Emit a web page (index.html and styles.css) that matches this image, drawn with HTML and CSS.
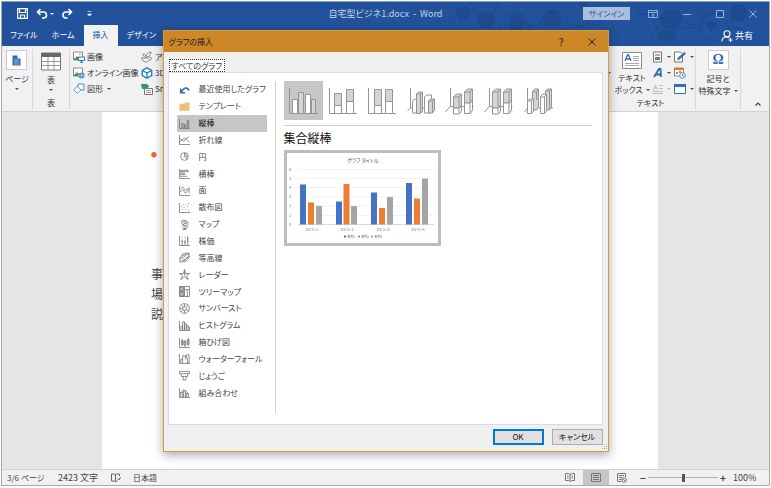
FILE: index.html
```html
<!DOCTYPE html>
<html lang="ja">
<head>
<meta charset="utf-8">
<meta name="viewport" content="width=device-width, initial-scale=1">
<title>自宅型ビジネ1.docx - Word</title>
<link rel="stylesheet" href="styles.css">
</head>
<body>
<div class="app">
  <header class="titlebar">
    <svg class="pattern" viewBox="0 0 320 44" aria-hidden="true">
      <g fill="#1e4a90" stroke="none">
        <path d="M16 4h8l4 7-4 7h-8l-4-7z"/><path d="M38 10h10l5 8-5 8h-10l-5-8z"/><path d="M67 14h10l5 8-5 8h-10z"/><path d="M104 8h10l5 8-5 8h-10l-5-8z"/><path d="M134 0h12l-6 10z"/><path d="M222 8h12l6 9-6 10h-12l-6-10z"/><path d="M218 28h12l4 6-4 5h-12l-4-5z"/><path d="M262 20h12l-6 10z"/><path d="M288 2h12l5 8-5 9h-12z"/>
      </g>
      <g fill="none" stroke="#1d498e">
        <path d="M0 18h10l6-10h14l7 12 12 0M28 0l8 12h14l7-12M56 26l8-14h14l8 14-8 12M84 24h12l8-14h16l8 14h14l8-14M186 26l8-14h12l8 14 8 0M206 12l8-12M214 26l-6 12M240 26h16l8-14h14l8 14h16M264 12l-8-12M286 26l-8 12h-14l-8-12"/>
        <circle cx="78" cy="22" r="9"/><circle cx="152" cy="14" r="9"/><circle cx="250" cy="14" r="9"/>
      </g>
    </svg>
    <div class="quick">
      <button aria-label="上書き保存"><svg width="11" height="11" viewBox="0 0 11 11"><path d="M.7.7h9.6v9.6H.7zM2.500 1v3.500h6V1M3.500 10V7h4v3" fill="none" stroke="#fff" stroke-width="1.2"/></svg></button>
      <button aria-label="元に戻す"><svg width="18" height="11" viewBox="0 0 18 11"><path d="M4.500 1L1.500 4l3 3M2 4h5.500a3 3 0 0 1 0 6H6" fill="none" stroke="#fff" stroke-width="1.6"/><path d="M14 5h4l-2 2z" fill="#fff"/></svg></button>
      <button aria-label="やり直し"><svg width="11" height="11" viewBox="0 0 11 11"><path d="M6.500 1l3 3-3 3M9 4H4a3 3 0 0 0 0 6h1.500" fill="none" stroke="#fff" stroke-width="1.600"/></svg></button>
      <button aria-label="カスタマイズ" class="more"><svg width="5" height="6" viewBox="0 0 5 6"><path d="M.5.500h4M.5 3h4l-2 2z" fill="#fff" stroke="#fff" stroke-width=".6"/></svg></button>
    </div>
    <h1>自宅型ビジネ1.docx &nbsp;- &nbsp;Word</h1>
    <div class="winctl">
      <button class="signin">サインイン</button>
      <button aria-label="リボンの表示オプション"><svg width="10" height="8" viewBox="0 0 10 8"><path d="M.5.5h9v7h-9zM.5 2.500h9M5 7V4M3.500 5.200L5 3.800l1.500 1.400" fill="none" stroke="#9eb4d6" stroke-width=".9"/></svg></button>
      <button aria-label="最小化"><svg width="8" height="8" viewBox="0 0 8 8"><path d="M0 4.500h8" stroke="#9eb4d6"/></svg></button>
      <button aria-label="最大化"><svg width="8" height="8" viewBox="0 0 8 8"><path d="M.5.500h7v7h-7z" fill="none" stroke="#9eb4d6"/></svg></button>
      <button aria-label="閉じる"><svg width="8" height="8" viewBox="0 0 8 8"><path d="M.5.500l7 7m0-7l-7 7" stroke="#9eb4d6"/></svg></button>
    </div>
  </header>
  <nav class="tabs">
    <a href="#">ファイル</a><a href="#">ホーム</a><a href="#" class="on">挿入</a><a href="#">デザイン</a>
    <button class="share"><svg width="12" height="12" viewBox="0 0 12 12" fill="none" stroke="#fff" stroke-width="1.100"><circle cx="6" cy="3.800" r="3"/><path d="M.8 11.500C1 8.500 3 7 5.500 7s2.500.5 3 1M7.500 10h4M9.500 8v4"/></svg>共有</button>
  </nav>
  <section class="ribbon">
    <div class="group g-page">
      <button class="big"><span class="box"><svg width="9" height="11" viewBox="0 0 9 11"><path d="M.5.500h5l3 3v7h-8z" fill="#2f6db5"/><path d="M5.500 0v3.500H9" fill="#fff"/><path d="M2 5h5M2 7h5M2 9h5" stroke="#bcd3ee" stroke-width=".7"/></svg></span>ページ<i class="dd"></i></button>
    </div>
    <div class="group g-table">
      <button class="big"><svg width="20" height="19" viewBox="0 0 20 19"><path d="M.5 1h19v17H.5z" fill="#fff" stroke="#777"/><path d="M0 1h20v4H0z" fill="#686868"/><path d="M1 9.500h18M1 13.500h18M7 5v13M13 5v13" stroke="#999"/></svg>表<i class="dd"></i></button>
      <span class="glabel">表</span>
    </div>
    <div class="group g-fig">
      <div class="col">
        <button><svg width="12" height="12" viewBox="0 0 12 12"><path d="M.5 1h9v8h-9z" fill="#fff" stroke="#888"/><path d="M1 8l3-3 2 2v2H1z" fill="#5d8f67"/><circle cx="7" cy="3.200" r="1" fill="#e3a44c"/><path d="M5.500 6h6v3.500h-6zM8.500 9.500V11M7 11.300h3" fill="#fff" stroke="#2f6db5"/></svg>画像</button>
        <button><svg width="12" height="12" viewBox="0 0 12 12"><path d="M.5 1h9v8h-9z" fill="#fff" stroke="#888"/><path d="M1 8l3-3 2 2v2H1z" fill="#5d8f67"/><circle cx="8.500" cy="8.500" r="3" fill="#4e88c7"/><path d="M5.500 8.500h6M8.500 5.500v6" stroke="#d5e4f4" stroke-width=".6"/></svg>オンライン画像</button>
        <button><svg width="12" height="12" viewBox="0 0 12 12" fill="#fff" stroke="#4e88c7"><path d="M5 1h6v6H5z"/><path d="M4 3l4 4-4 4-4-4z" transform="translate(.7 .5) scale(.9)"/></svg>図形<i class="dd"></i></button>
      </div>
      <div class="col">
        <button><svg width="12" height="12" viewBox="0 0 12 12" fill="none" stroke="#7d8a90"><path d="M5 5c1-3 3-4 5-4 0 3-2 5-5 5M5 5C4 3 3 3 2 3c0 2 1 3 3 3M.5 7h7c1-1 3-1 3 .5S9 9 8 9c-1 3-6 3-7.500-2z"/></svg>アイコン</button>
        <button><svg width="12" height="12" viewBox="0 0 12 12" fill="#fff" stroke="#2b7cc8" stroke-width="1.400"><path d="M6 .8l4.700 2.500v5.400L6 11.200 1.300 8.700V3.300z"/><path d="M1.300 3.300L6 6l4.700-2.700M6 6v5"/></svg>3D モデル</button>
        <button><svg width="12" height="12" viewBox="0 0 12 12"><path d="M0 1h6l2 2.500L6 6H1z" fill="#31956b"/><path d="M3.500 5.500h8v6h-8z" fill="#fff" stroke="#777"/><path d="M5 7.500h5M5 9.500h5" stroke="#999"/></svg>SmartArt</button>
      </div>
    </div>
    <div class="group g-text">
      <div class="row">
        <i class="dd edge"></i>
        <button class="big"><svg width="20" height="17" viewBox="0 0 20 17"><path d="M.5.500h19v16H.5z" fill="#fff" stroke="#888"/><path d="M3 9l2.500-6h1L9 9M4 7h4" fill="none" stroke="#2f6db5" stroke-width="1.300"/><path d="M11 4.500h6M11 6.500h6M11 8.500h6M3 11.500h14M3 13.500h14" stroke="#aaa"/></svg><span>テキスト<br>ボックス<i class="dd inline"></i></span></button>
        <div class="icons">
          <button aria-label="クイック パーツ"><svg width="10" height="12" viewBox="0 0 10 12"><path d="M.5 1h8v10h-8z" fill="#fff" stroke="#777"/><path d="M2 3h5v2H2z" fill="#e0a453"/><path d="M2 6h5v3H2z" fill="#4c83c3"/></svg><i class="dd"></i></button>
          <button aria-label="署名欄"><svg width="12" height="12" viewBox="0 0 12 12"><path d="M.5 1h6l2 2v8h-8z" fill="#fff" stroke="#777"/><path d="M3 9l1-2.500L10.500 1 12 2.500 5.500 8.500z" fill="#2f6db5"/></svg><i class="dd"></i></button>
          <button aria-label="ワードアート"><svg width="10" height="12" viewBox="0 0 10 12"><path d="M1 10l5-8h1.500l.5 8M3 7.500h5" fill="none" stroke="#2a69b5" stroke-width="1.800"/></svg><i class="dd"></i></button>
          <button aria-label="日付と時刻"><svg width="12" height="12" viewBox="0 0 12 12"><path d="M.5 1h9v8h-9z" fill="#fff" stroke="#888"/><path d="M0 1h10v2H0zM2 5h2v2H2zM5 4h2v2H5z" fill="#d9773f"/><circle cx="8.500" cy="8.500" r="2.800" fill="#fff" stroke="#4e88c7"/><path d="M8.500 7v2h1.500" fill="none" stroke="#4e88c7"/></svg></button>
          <button aria-label="ドロップ キャップ" class="off"><svg width="10" height="12" viewBox="0 0 10 12"><path d="M.5 7l2-5 2 5M1 5h3M6 2.500h4M6 5.500h4M0 8.500h10M0 10.500h10" fill="none" stroke="#bbb"/></svg><i class="dd"></i></button>
          <button aria-label="オブジェクト"><svg width="12" height="12" viewBox="0 0 12 12"><path d="M.5 1.500h11v9H.5z" fill="#fff" stroke="#2f6db5"/><path d="M0 1h12v3H0z" fill="#2f6db5"/></svg><i class="dd"></i></button>
        </div>
      </div>
      <span class="glabel">テキスト</span>
    </div>
    <div class="group g-sym">
      <button class="big"><span class="box omega">Ω</span><span>記号と<br>特殊文字<i class="dd inline"></i></span></button>
    </div>
    <button class="fold" aria-label="リボンを折りたたむ"><svg width="6" height="4" viewBox="0 0 6 4"><path d="M.5 3.500L3 1l2.500 2.500" fill="none" stroke="#444" stroke-width="1.200"/></svg></button>
  </section>
  <main class="canvas">
    <article class="page">
      <p class="bullet">●</p>
      <p>事業の</p><p>場所の</p><p>説明の</p>
    </article>
  </main>
  <footer class="status">
    <span class="s-page">3/6 ページ</span><span class="s-count">2423 文字</span>
    <svg class="s-proof" width="10" height="10" viewBox="0 0 10 10" fill="none" stroke="#666"><path d="M4.500 2v7L3.500 8H.5V1h3zM4.500 2l1-1h3v2M4.500 9l1-1h1M6.500 5.500L8 7l1.500-3"/></svg>
    <span>日本語</span>
    <div class="views">
      <button aria-label="閲覧モード"><svg width="10" height="9" viewBox="0 0 10 9" fill="none" stroke="#777"><path d="M.5.500h3l1.500 1 1.500-1h3v7h-3L5 8.500l-1.500-1h-3zM5 1v7M2 3h1.500M2 5h1.500M6.500 3H8M6.500 5H8"/></svg></button>
      <button aria-label="印刷レイアウト" class="on"><svg width="10" height="9" viewBox="0 0 10 9" fill="none" stroke="#777"><path d="M.5.500h9v8h-9zM2 2.500h6M2 4.500h6M2 6.500h6"/></svg></button>
      <button aria-label="Web レイアウト"><svg width="10" height="10" viewBox="0 0 10 10" fill="none" stroke="#777"><path d="M4 8.500H.5v-8h8V4M2 2.500h5M2 4.500h3M2 6.500h2"/><circle cx="7" cy="7" r="2.300"/><path d="M5.500 6l3 2"/></svg></button>
    </div>
    <div class="zoom"><button aria-label="縮小">−</button><input type="range" aria-label="ズーム" min="0" max="200" value="100"><button aria-label="拡大">+</button></div>
    <span class="pct">100%</span>
  </footer>

  <section class="dialog" role="dialog" aria-labelledby="dlg">
    <header class="dhead"><h2 id="dlg">グラフの挿入</h2><button class="help" aria-label="ヘルプ">?</button><button aria-label="閉じる"><svg width="8" height="8" viewBox="0 0 8 8"><path d="M.5.500l7 7m0-7l-7 7" stroke="#222"/></svg></button></header>
    <div class="dbody">
      <button class="dtab">すべてのグラフ</button>
      <div class="panel">
        <ul class="kinds">
          <li><svg viewBox="0 0 12 12"><path d="M6.500 9.500H1.800V4.800M2 9l3-3.500C7 3.500 9.500 4 11 7" fill="none" stroke="#2b68b0" stroke-width="1.700"/></svg>最近使用したグラフ</li>
          <li><svg viewBox="0 0 12 12"><path d="M.5 3H6l1-1.500h4.500v9H.5z" fill="#eac07a" stroke="none"/></svg>テンプレート</li>
          <li class="on"><svg viewBox="0 0 12 12"><path d="M.5 1v10.500H12M3 11V6h1.500v5M6 11V7h1.500v4M9 11V2.500h1.500V11"/></svg>縦棒</li>
          <li><svg viewBox="0 0 12 12"><path d="M.5 1v10.500H12M1 9l5-5 5 5M1 5l4 3 3-3 3-2"/></svg>折れ線</li>
          <li><svg viewBox="0 0 12 12"><circle cx="6" cy="6" r="4.200"/><path d="M6 2v4l3 3M7.500 2.500V6H10"/></svg>円</li>
          <li><svg viewBox="0 0 12 12"><path d="M.5 1v10.500H12M1 2.500h9v1.500H1M1 5.500h5V7H1M1 9h8"/></svg>横棒</li>
          <li><svg viewBox="0 0 12 12"><path d="M.5 1v10.500H12M1 5l3-3 3 4 4-3v6M1 8l3-3 3 4 4-4"/></svg>面</li>
          <li><svg viewBox="0 0 12 12"><path d="M.5 1v10.500H12"/><path d="M3 8h1M5 6h1M7 8h1M9 5h1M4 3h1M7 3h1M10 2h1M10 9h1M2 5h1"/></svg>散布図</li>
          <li><svg viewBox="0 0 12 12"><path d="M3 2l2-1 3 1 2 2-1 3-2 2-2-1-2-3zM4 3h4v2H5v2h3M3 9c2 2 5 2 7-1M6 10v1.500M4 11.500h4"/></svg>マップ</li>
          <li><svg viewBox="0 0 12 12"><path d="M.5 1v10.500H12M3.500 5v6M6.500 5v6M9.500 1v10"/><path d="M3.500 2v1M6.500 2v1M2.500 7h2M5.500 8h2M8.500 4h2M8.500 7h2"/></svg>株価</li>
          <li><svg viewBox="0 0 12 12"><path d="M1 7l3-5 7-1v5l-3 4-7 1zM1 7l4-1 3-3 3-1M3 9c3 0 5-2 8-5M3 5c2-2 4-1 5-3M5 10l3-3 3-2"/></svg>等高線</li>
          <li><svg viewBox="0 0 12 12"><path d="M6 .5l1 4.500 4.500 0L8 7l2 4.500L6 8.500l-4 3L4 7 .5 5H5zM6 1v6"/></svg>レーダー</li>
          <li><svg viewBox="0 0 12 12"><path d="M.5.500h11v11H.5zM6 1v10M6 4h5M9 4v7M1 6h5"/><path d="M1 1h4v4H1zM1 7h4v4H1z" fill="#bbb"/></svg>ツリーマップ</li>
          <li><svg viewBox="0 0 12 12"><circle cx="6" cy="6" r="5.300"/><circle cx="6" cy="6" r="2"/><path d="M6 1v3M1 6h3M8 7l3 2M4.500 7.500L2 10M8 4l2-2M3 3l2 1.500M6 8v3"/></svg>サンバースト</li>
          <li><svg viewBox="0 0 12 12"><path d="M.5 1v10.500H12M2 11V7h2v4M4 11V2h2v9M6 11V4h2v7M8 11V6h2v5M10 8h1.500v3"/></svg>ヒストグラム</li>
          <li><svg viewBox="0 0 12 12"><path d="M.5 1v10.500H12M3.500 2v8M6.500 3v8M10 1v9M2.500 4h2v4h-2zM5.500 5h2v4h-2zM9 3h2v5H9z"/></svg>箱ひげ図</li>
          <li><svg viewBox="0 0 12 12"><path d="M.5 1v10.500H12M2 11V7h2v4M4 7V3h3v4M8 5V2h3v9H9V5z"/></svg>ウォーターフォール</li>
          <li><svg viewBox="0 0 12 12"><path d="M.5 1.500h11v2.500H.5zM2.500 4v3h7V4M4.500 7v4h3V7"/></svg>じょうご</li>
          <li><svg viewBox="0 0 12 12"><path d="M.5 1v10.500H12M2 11V6h2v5M5 11V4h2v7M8 11V7h2v4M1 7l4-4 3 2 3 4"/></svg>組み合わせ</li>
        </ul>
        <div class="detail">
          <div class="thumbs">
            <button class="on" aria-label="集合縦棒"><svg viewBox="0 0 39 39"><path class="w" d="M8.500 18.500h5v14h-5zM21.500 13.500h5v19h-5z"/><path class="g" d="M14.500 11.500h5v21h-5zM27.500 18.500h4v14h-4z"/><path class="a" d="M5.500 7v25.500H34"/></svg></button>
            <button aria-label="積み上げ縦棒"><svg viewBox="0 0 39 39"><path class="w" d="M11.500 24.500h7v8h-7zM23.500 20.500h7v12h-7z"/><path class="g" d="M11.500 12.500h7v12h-7zM23.500 8.500h7v12h-7z"/><path class="a" d="M6.500 7v25.500H34"/></svg></button>
            <button aria-label="100% 積み上げ縦棒"><svg viewBox="0 0 39 39"><path class="w" d="M12.500 24.500h7v8h-7zM23.500 20.500h7v12h-7z"/><path class="g" d="M12.500 8.500h7v16h-7zM23.500 8.500h7v12h-7z"/><path class="a" d="M6.500 7v25.500H34"/></svg></button>
            <button aria-label="3-D 集合縦棒"><svg viewBox="0 0 39 39"><path class="a" d="M9.500 7v20l-3 3M9.500 27H34"/><path class="w" d="M11.500 20l2-2h3v14h-5zM23.500 16l2-2h5v15l-2 3h-5z"/><path class="g" d="M15.500 13l2-2h4v19l-2 2.500h-4zM27.500 20l2-2h4v11l-2 3h-4z"/><path class="a" d="M15.500 13h4l2-2M19.500 13v19M27.500 20h4l2-2M31.500 20v12"/></svg></button>
            <button aria-label="3-D 積み上げ縦棒"><svg viewBox="0 0 39 39"><path class="a" d="M10.500 7v18l-5 6M10.500 25.500h23"/><path class="g" d="M13.500 16l3-3h5v11l-2 3h-6zM24.500 11l3-3h5v11l-2 3h-6z"/><path class="w" d="M13.500 27h6l2-3v6l-2 3h-6zM24.500 22h6l2-3v10l-2 3.500h-6z"/><path class="a" d="M13.500 16h5.500l2.500-3M19 16v16M24.500 11H30l2.500-3M30 11v21"/></svg></button>
            <button aria-label="3-D 100% 積み上げ縦棒"><svg viewBox="0 0 39 39"><path class="a" d="M10.500 7v18l-5 6M10.500 25.500h23"/><path class="g" d="M13.500 11l3-3h5v16l-2 3h-6zM24.500 11l3-3h5v11l-2 3h-6z"/><path class="w" d="M13.500 27h6l2-3v6l-2 3h-6zM24.500 22h6l2-3v10l-2 3.500h-6z"/><path class="a" d="M13.500 11h5.500l2.500-3M19 11v21M24.500 11H30l2.500-3M30 11v21"/></svg></button>
            <button aria-label="3-D 縦棒"><svg viewBox="0 0 39 39"><path class="a" d="M9.500 7v20l-3 4M9.500 27H35"/><path class="g" d="M14.500 11l2-3h4v17l-2 4h-4zM27.500 10l2-2h4v18l-2 3h-4z"/><path class="w" d="M9.500 20l2-2h4v12l-2 2.500h-4zM22.500 16l2-3h4v17l-2 2.500h-4z"/><path class="a" d="M14.500 11h4l2-3M18.500 11v8M9.500 20h4l2-2M13.500 20v12M22.500 16h4l2-3M26.500 16v16M27.500 10h4l2-2M31.500 10v18"/></svg></button>
          </div>
          <h3>集合縦棒</h3>
          <svg class="preview" viewBox="0 0 151 90" role="img" aria-label="グラフ タイトル">
            <path d="M11 62.500h136M11 53h136M11 44h136M11 34.500h136M11 25.500h136M11 16.500h136" stroke="#ececec" stroke-width=".7"/>
            <path d="M11 71.500h136" stroke="#ccc" stroke-width=".7"/>
            <g fill="#4472c4"><path d="M13 71.500V31.500h6v40zM49 71.500v-23h6v23zM84 71.500v-32h6v32zM119 71.500V30h6v41.500z"/></g>
            <g fill="#ed7d31"><path d="M21 71.500v-22h6v22zM56.500 71.500V31h6v40.500zM92 71.500V55h6v16.500zM127 71.500v-26h6v26z"/></g>
            <g fill="#a5a5a5"><path d="M29 71.500V53h6v18.500zM64 71.500V53h6v18.500zM100 71.500V44h6v27.500zM135 71.500V25.500h6v46z"/></g>
            <g class="ct"><text x="76" y="9" class="t">グラフ タイトル</text>
            <text x="3" y="73">0</text><text x="3" y="64">1</text><text x="3" y="54">2</text><text x="3" y="45">3</text><text x="3" y="36">4</text><text x="3" y="27">5</text><text x="3" y="18">6</text>
            <text x="25" y="78">カテゴリ 1</text><text x="60" y="78">カテゴリ 2</text><text x="96" y="78">カテゴリ 3</text><text x="131" y="78">カテゴリ 4</text>
            <text x="64" y="85">系列1</text><text x="78" y="85">系列2</text><text x="91" y="85">系列3</text></g>
            <path d="M57 82.500h2v2h-2z" fill="#4472c4"/><path d="M71 82.500h2v2h-2z" fill="#ed7d31"/><path d="M84 82.500h2v2h-2z" fill="#a5a5a5"/>
          </svg>
        </div>
      </div>
      <div class="actions"><button class="ok">OK</button><button>キャンセル</button></div>
    </div>
    <svg class="grip" width="7" height="7" viewBox="0 0 7 7"><path d="M5 0h1v1H5zM5 2h1v1H5zM5 4h1v1H5zM3 2h1v1H3zM3 4h1v1H3zM1 4h1v1H1z" fill="#aaa"/></svg>
  </section>
</div>
</body>
</html>
```

FILE: styles.css
```css
* { box-sizing: border-box; }
html, body { height: 100%; }
body {
  margin: 0;
  display: flex;
  background: #fff;
  color: #333;
  font: 8px/12px "Noto Sans CJK JP", "Noto Sans", sans-serif;
  font-feature-settings: "palt";
}
button {
  padding: 0;
  border: 0;
  background: none;
  color: inherit;
  font: inherit;
  font-feature-settings: inherit;
}
h1, h2, h3, p, ul { margin: 0; padding: 0; font-weight: 400; }
svg { display: block; flex: none; }

.app {
  position: relative;
  flex: 1;
  display: flex;
  flex-direction: column;
  margin: 1px 1px 2px;
  border: 1px solid #aaa;
  border-top-color: #8a9dbd;
  overflow: hidden;
}

/* Title bar */
.titlebar {
  position: relative;
  flex: none;
  display: grid;
  grid-template-columns: 1fr auto 1fr;
  height: 23px;
  align-items: center;
  background: #22529b;
  color: #c3d0e5;
}
.pattern { position: absolute; right: 6px; top: 0; width: 320px; height: 44px; }
.quick { display: flex; align-items: center; gap: 8px; padding-left: 15px; }
.quick .more { margin-left: 6px; }
h1 { font-size: 9px; }
.winctl { position: relative; display: flex; justify-content: flex-end; align-items: center; gap: 25px; padding-right: 12px; }
.signin { width: 47px; height: 13px; margin-right: -7px; background: #aabfde; color: #22529b; }

.tabs { flex: none; display: flex; height: 21px; padding-left: 1px; background: #22529b; }
.tabs a { padding: 0 7px; color: #fff; text-decoration: none; line-height: 20px; }
.tabs a.on { margin: 0 2px; padding: 0 9px; background: #f3f3f3; color: #22529b; }
.share { position: relative; margin: 0 16px 0 auto; display: flex; align-items: center; gap: 2px; color: #fff; font-size: 9px; }

/* Ribbon */
.ribbon {
  flex: none;
  display: flex;
  height: 66px;
  padding: 3px 0 2px;
  background: #f1f1f1;
  border-bottom: 1px solid #d2d2d2;
}
.group { display: flex; flex-direction: column; align-items: center; border-right: 1px solid #d8d8d8; }
.g-page { width: 31px; }
.g-table { width: 37px; }
.g-fig { flex-direction: row; align-items: flex-start; gap: 7px; padding-left: 3px; border: 0; }
.g-text { width: 90px; margin-left: auto; }
.g-sym { width: 45px; }
.big { display: flex; flex-direction: column; align-items: center; line-height: 12px; gap: 3px; padding-top: 1px; }
.g-table .big { padding-top: 3px; }
.box { display: grid; place-items: center; width: 21px; height: 20px; background: #fff; border: 1px solid #ccc; }
.omega { color: #2f6db5; font: bold 14px/16px "Liberation Serif", serif; }
.dd { flex: none; width: 0; height: 0; border: 2px solid transparent; border-top-color: #555; border-bottom: 0; }
.dd.inline { display: inline-block; margin-left: 3px; vertical-align: 2px; }
.glabel { margin-top: auto; }
.col:first-child { width: 61px; }
.col button { display: flex; align-items: center; gap: 2px; height: 16px; white-space: nowrap; }
.col .dd { margin-left: 2px; }
.row { display: flex; gap: 3px; }
.row .big { padding-top: 3px; white-space: nowrap; }
.edge { align-self: center; }
.icons { display: grid; grid-template-columns: 19px 20px; grid-auto-rows: 16px; gap: 0 2px; }
.icons button { display: flex; align-items: center; gap: 4px; }
.off .dd { border-top-color: #bbb; }
.fold { align-self: flex-end; padding: 3px 8px 3px 14px; }

/* Document */
.canvas { flex: 1; display: flex; min-height: 0; padding: 0 111px 0 100px; background: #e5e5e5; }
.page { flex: 1; padding: 34px 0 0 49px; background: #fff; color: #444; font-size: 12px; line-height: 20px; overflow: hidden; }
.bullet { height: 118px; color: #f26a1b; font-size: 6px; line-height: 18px; }

/* Status bar */
.status { flex: none; display: flex; align-items: center; height: 16px; padding-left: 5px; background: #f1f1f1; border-top: 1px solid #d2d2d2; color: #444; white-space: nowrap; }
.s-page { width: 51px; }
.s-count { font-size: 9px; }
.s-proof { margin: 0 12px 0 13px; }
.views { display: flex; align-self: stretch; margin-left: auto; }
.views button { display: grid; place-items: center; width: 26px; }
.views .on { background: #c6c6c6; }
.zoom { display: flex; align-items: center; gap: 2px; margin: 0 7px 0 5px; }
.zoom button { width: 6px; font-size: 10px; font-weight: 700; }
.zoom input { appearance: none; width: 70px; height: 12px; margin: 0; background: linear-gradient(#b0b0b0, #b0b0b0) center / 100% 1px no-repeat; }
.zoom input::-webkit-slider-thumb { appearance: none; width: 3px; height: 8px; background: #555; }
.pct { width: 36px; font-size: 9px; }

/* Insert chart dialog */
.dialog {
  position: absolute;
  top: 28px;
  left: 0;
  right: 0;
  width: 446px;
  margin: 0 auto;
  background: #f0f0f0;
  border: 1px solid #d99a3a;
  box-shadow: 0 3px 10px rgba(0, 0, 0, .35);
}
.dhead { display: flex; align-items: center; height: 21px; padding: 0 12px 0 5px; background: #cb8728; color: #222; }
.dhead h2 { flex: 1; font-size: 8px; }
.dhead button { margin-left: 24px; }
.dhead .help { font-size: 10px; }
.dbody { padding: 7px 5px 6px 4px; }
.dtab { display: block; height: 13px; margin-left: 1px; padding: 0 2px; border: 1px dotted #333; background: #fff; line-height: 11px; }
.panel { display: flex; padding: 8px 10px 11px 8px; background: #fff; border: 1px solid #dcdcdc; }
.kinds { display: grid; grid-auto-rows: 1fr; width: 99px; height: 332px; padding: 0 8px 12px 0; border-right: 1px solid #d0d0d0; list-style: none; color: #444; }
.kinds li { display: flex; align-items: center; gap: 9px; padding-left: 2px; line-height: 12px; white-space: nowrap; }
.kinds .on { background: #c6c6c6; color: #111; }
.kinds svg { width: 11px; height: 11px; fill: none; stroke: #777; stroke-width: .9; }
.detail { flex: 1; padding-left: 8px; }
.thumbs { display: flex; padding-bottom: 5px; border-bottom: 1px solid #ccc; }
.thumbs button { width: 39px; height: 39px; }
.thumbs .on { background: #c6c6c6; }
.w { fill: #fff; stroke: #949494; }
.g { fill: #d5d5d5; stroke: #949494; }
.a { fill: none; stroke: #949494; }
h3 { padding: 3px 0; color: #111; font-size: 12px; line-height: 18px; }
.preview { width: 157px; height: 96px; border: 3px solid #bdbdbd; background: #fff; }
.ct { font-size: 3px; text-anchor: middle; fill: #555; }
.ct .t { font-size: 5px; }
.actions { display: flex; justify-content: flex-end; gap: 8px; padding-top: 4px; }
.actions button { width: 51px; height: 16px; border: 1px solid #adadad; background: #e1e1e1; color: #111; line-height: 12px; }
.actions .ok { border: 2px solid #0078d7; }
.grip { position: absolute; right: 0; bottom: 0; }
```
